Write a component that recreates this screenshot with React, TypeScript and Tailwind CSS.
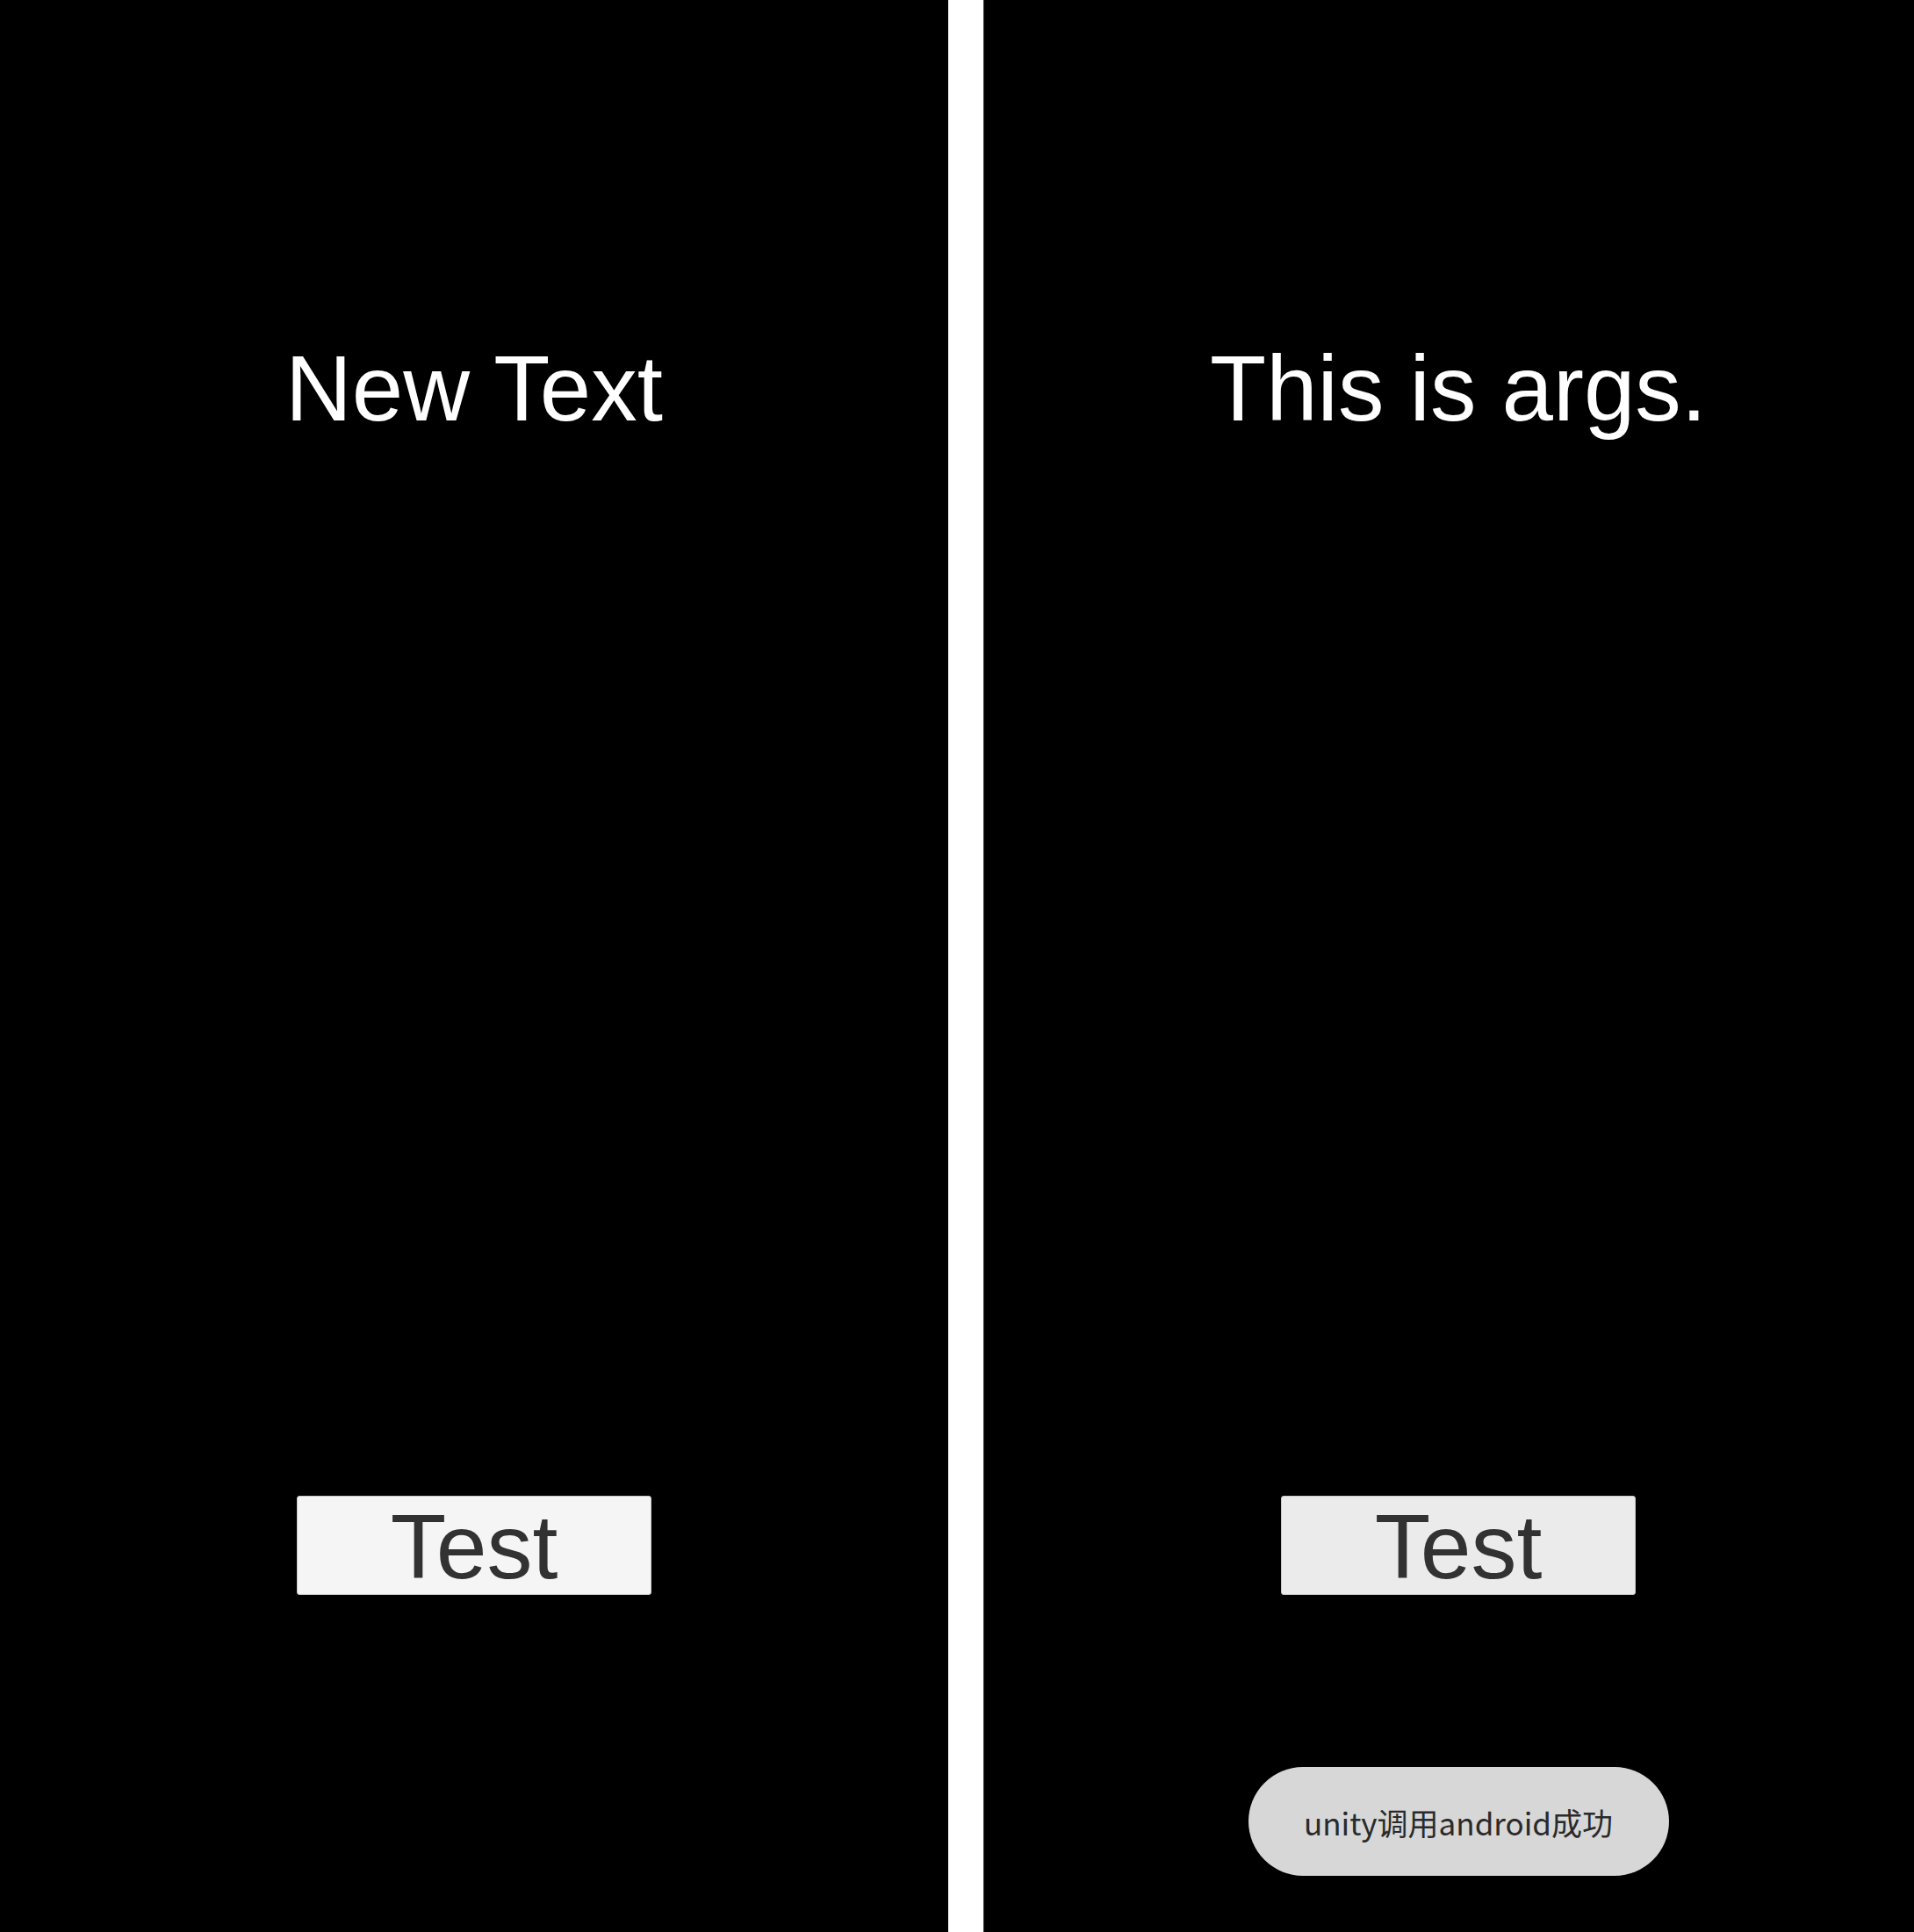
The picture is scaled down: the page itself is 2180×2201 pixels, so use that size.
const sans = { fontFamily: '"Liberation Sans", Arial, sans-serif' };

function Panel({ title, pressed, toast }: { title: string; pressed?: boolean; toast?: string }) {
  return (
    <div className="w-[1080px] shrink-0 h-full bg-black flex flex-col items-center">
      <p className="mt-[390px] text-[105px] leading-none text-white whitespace-nowrap" style={sans}>
        {title}
      </p>
      <button
        className={
          "mt-[1209px] w-[404px] h-[113px] rounded-[3px] border border-[#c8c8c8] flex items-center justify-center " +
          (pressed ? "bg-[#ebebeb]" : "bg-[#f5f5f5]")
        }
      >
        <span className="text-[104px] leading-none text-[#323232] mt-[2px]" style={sans}>
          Test
        </span>
      </button>
      {toast && (
        <div className="mt-[196px] w-[479px] h-[124px] rounded-full bg-[#d7d7d7] flex items-center justify-center">
          <span
            className="text-[35px] leading-none text-[#2a2a2a] whitespace-nowrap"
            style={{ fontFamily: '"Noto Sans CJK SC", "Noto Sans", sans-serif' }}
          >
            {toast}
          </span>
        </div>
      )}
    </div>
  );
}

export default function App() {
  return (
    <div className="w-[2180px] h-[2201px] flex overflow-hidden bg-white">
      <Panel title="New Text" />
      <div className="w-[40px] shrink-0 h-full bg-white" />
      <div className="w-px shrink-0 h-full bg-[#333333]" />
      <Panel title="This is args." pressed toast="unity调用android成功" />
    </div>
  );
}
